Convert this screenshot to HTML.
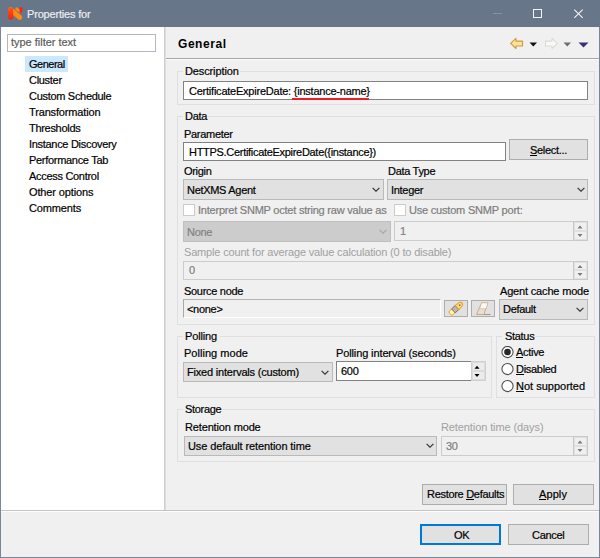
<!DOCTYPE html>
<html><head><meta charset="utf-8">
<style>
*{box-sizing:border-box;margin:0;padding:0}
html,body{width:600px;height:558px;overflow:hidden;background:#f0f0f0}
body{position:relative;font-family:"Liberation Sans",sans-serif;font-size:11px;line-height:12px;color:#000}
.a{position:absolute}
.t{position:absolute;white-space:pre;letter-spacing:-0.3px;font-size:11px;line-height:12px;-webkit-text-stroke-width:0.2px}
.dis{color:#a0a0a0;-webkit-text-stroke-width:0 !important}
.dis2{color:#7d7d7d}
.grp{position:absolute;border:1px solid #dfdfdf}
.txt{position:absolute;background:#fff;border:1px solid #828282}
.btn{position:absolute;background:#e1e1e1;border:1px solid #adadad}
.cmb{position:absolute;background:#e1e1e1;border:1px solid #b9b9b9}
.chev{position:absolute;width:8px;height:5px}
u{text-decoration:none;border-bottom:1px solid currentColor;display:inline-block;line-height:10px}
</style></head>
<body>
<!-- title bar -->
<div class="a" style="left:0;top:0;width:600px;height:27px;background:#68768a"></div>
<div class="a" style="left:0;top:27px;width:1px;height:531px;background:#7a8698"></div>
<div class="a" style="left:599px;top:27px;width:1px;height:531px;background:#7a8698"></div>
<div class="a" style="left:0;top:557px;width:600px;height:1px;background:#7a8698"></div>
<svg class="a" style="left:5px;top:4px" width="21" height="19" viewBox="0 0 21 19">
  <defs>
    <linearGradient id="lg1" gradientUnits="userSpaceOnUse" x1="0" y1="3" x2="0" y2="16"><stop offset="0" stop-color="#ff5a16"/><stop offset="1" stop-color="#ff1c0a"/></linearGradient>
  </defs>
  <path d="M11.6 4.7 L14 6.8" stroke="#ff8612" stroke-width="2.8" stroke-linecap="round"/>
  <path d="M16 4.4 L16 7.6" stroke="#ff220c" stroke-width="2.8" stroke-linecap="round"/>
  <path d="M5.7 5.7 L14.7 13.3" stroke="#ff8a12" stroke-width="5" stroke-linecap="round"/>
  <path d="M5.7 5.7 L5.7 13.3" stroke="url(#lg1)" stroke-width="5" stroke-linecap="round"/>
</svg>
<div class="t" style="left:27px;top:8px;color:#eaeef2;letter-spacing:-0.18px">Properties for</div>
<div class="a" style="left:493px;top:13px;width:9px;height:1px;background:#8693a4"></div>
<div class="a" style="left:533px;top:9px;width:9px;height:9px;border:1px solid #f2f4f6"></div>
<svg class="a" style="left:573px;top:8px" width="12" height="12" viewBox="0 0 12 12"><path d="M1.3 1.6 L9.7 9.9 M9.7 1.6 L1.3 9.9" stroke="#f4f6f8" stroke-width="1.05"/></svg>

<!-- sidebar -->
<div class="a" style="left:1px;top:27px;width:163px;height:483px;background:#fff"></div>
<div class="a" style="left:164px;top:27px;width:1px;height:483px;background:#d0d0d0"></div>
<div class="a" style="left:165px;top:27px;width:1px;height:483px;background:#dcdcdc"></div>
<div class="a" style="left:7px;top:34px;width:149px;height:18px;border:1px solid #b3b7c2;background:#fff"></div>
<div class="t" style="left:11px;top:36px;letter-spacing:-0.02px;color:#5c5c5c">type filter text</div>
<div class="a" style="left:25px;top:56px;width:43px;height:16px;background:#cce8ff"></div>
<div class="t" style="left:29px;top:58px;letter-spacing:-0.5px">General</div>
<div class="t" style="left:29px;top:74px">Cluster</div>
<div class="t" style="left:29px;top:90px">Custom Schedule</div>
<div class="t" style="left:29px;top:106px;letter-spacing:-0.15px">Transformation</div>
<div class="t" style="left:29px;top:122px">Thresholds</div>
<div class="t" style="left:29px;top:138px">Instance Discovery</div>
<div class="t" style="left:29px;top:154px">Performance Tab</div>
<div class="t" style="left:29px;top:170px">Access Control</div>
<div class="t" style="left:29px;top:186px;letter-spacing:-0.12px">Other options</div>
<div class="t" style="left:29px;top:202px;letter-spacing:-0.15px">Comments</div>

<!-- separators -->
<div class="a" style="left:1px;top:510px;width:598px;height:1px;background:#c4c4c4"></div>
<div class="a" style="left:1px;top:511px;width:598px;height:1px;background:#fdfdfd"></div>
<div class="a" style="left:166px;top:58px;width:433px;height:1px;background:#a6a6a6"></div>
<div class="a" style="left:166px;top:59px;width:433px;height:1px;background:#fcfcfc"></div>

<!-- header -->
<div class="t" style="left:178px;top:38px;font-weight:bold;font-size:12px;line-height:13px;letter-spacing:0.55px;-webkit-text-stroke-width:0">General</div>
<!-- back arrow -->
<svg class="a" style="left:509px;top:37px" width="16" height="13" viewBox="0 0 16 13">
  <path d="M1.6 6.4 L7 1.4 L7 4.1 L13.5 4.1 L13.5 9 L7 9 L7 11.5 Z" fill="#fae3a0" stroke="#d39a2e" stroke-width="1.1" stroke-linejoin="round"/>
</svg>
<svg class="a" style="left:529px;top:42px" width="9" height="5" viewBox="0 0 9 5"><path d="M0.5 0.5 L8 0.5 L4.25 4.5 Z" fill="#111"/></svg>
<svg class="a" style="left:543px;top:37px" width="16" height="13" viewBox="0 0 16 13">
  <path d="M14.4 6.4 L9 1.4 L9 4.1 L2.5 4.1 L2.5 9 L9 9 L9 11.5 Z" fill="#f8f8f6" stroke="#dcdcd6" stroke-width="1.1" stroke-linejoin="round"/>
</svg>
<svg class="a" style="left:563px;top:42px" width="9" height="5" viewBox="0 0 9 5"><path d="M0.5 0.5 L8 0.5 L4.25 4.5 Z" fill="#6e6e6e"/></svg>
<svg class="a" style="left:578px;top:42px" width="11" height="6" viewBox="0 0 11 6"><path d="M0.5 0.5 L10.5 0.5 L5.5 5.5 Z" fill="#3a3270"/></svg>

<!-- Description group -->
<div class="grp" style="left:177px;top:71px;width:418px;height:34px"></div>
<div class="a" style="left:183px;top:64px;width:57px;height:12px;background:#f0f0f0"></div>
<div class="t" style="left:185px;top:65px;letter-spacing:-0.12px">Description</div>
<div class="txt" style="left:183px;top:81px;width:405px;height:19px"></div>
<div class="t" style="left:189px;top:85px;letter-spacing:-0.23px">CertificateExpireDate: {instance-name}</div>
<div class="a" style="left:292px;top:98px;width:77px;height:2px;background:#f21a28"></div>

<!-- Data group -->
<div class="grp" style="left:177px;top:116px;width:418px;height:209px"></div>
<div class="a" style="left:183px;top:110px;width:25px;height:12px;background:#f0f0f0"></div>
<div class="t" style="left:185px;top:110px">Data</div>
<div class="t" style="left:184px;top:128px">Parameter</div>
<div class="txt" style="left:183px;top:142px;width:323px;height:19px"></div>
<div class="t" style="left:189px;top:146px">HTTPS.CertificateExpireDate({instance})</div>
<div class="btn" style="left:509px;top:139px;width:79px;height:21px"></div>
<div class="t" style="left:530px;top:144px"><u>S</u>elect...</div>
<div class="t" style="left:184px;top:165px">Origin</div>
<div class="t" style="left:388px;top:165px">Data Type</div>
<div class="cmb" style="left:183px;top:179px;width:201px;height:21px"></div>
<div class="t" style="left:187px;top:184px">NetXMS Agent</div>
<svg class="chev" style="left:372px;top:187px" viewBox="0 0 8 5"><path d="M0.6 0.9 L4 4.2 L7.4 0.9" fill="none" stroke="#3a3a3a" stroke-width="1.25"/></svg>
<div class="cmb" style="left:387px;top:179px;width:201px;height:21px"></div>
<div class="t" style="left:391px;top:184px">Integer</div>
<svg class="chev" style="left:577px;top:187px" viewBox="0 0 8 5"><path d="M0.6 0.9 L4 4.2 L7.4 0.9" fill="none" stroke="#3a3a3a" stroke-width="1.25"/></svg>
<div class="a" style="left:183px;top:204px;width:12px;height:12px;border:1px solid #cccccc;background:#fff"></div>
<div class="t dis2" style="left:198px;top:204px;letter-spacing:-0.22px">Interpret SNMP octet string raw value as</div>
<div class="a" style="left:394px;top:204px;width:12px;height:12px;border:1px solid #cccccc;background:#fff"></div>
<div class="t dis2" style="left:409px;top:204px;letter-spacing:-0.2px">Use custom SNMP port:</div>
<div class="a" style="left:183px;top:221px;width:208px;height:21px;background:#cccccc;border:1px solid #bfbfbf"></div>
<div class="t" style="left:187px;top:226px;color:#838383">None</div>
<svg class="chev" style="left:379px;top:229px" viewBox="0 0 8 5"><path d="M0.6 0.9 L4 4.2 L7.4 0.9" fill="none" stroke="#a8a8a8" stroke-width="1.25"/></svg>
<div class="a" style="left:394px;top:221px;width:194px;height:20px;background:#f0f0f0;border:1px solid #cccccc"></div>
<svg class="a" style="left:573px;top:221px" width="15" height="20" viewBox="0 0 15 20"><rect x="0.5" y="0.5" width="14" height="19" fill="#f0f0f0" stroke="#c9c9c9"/><rect x="1.5" y="1.5" width="12" height="8" fill="#f0f0f0" stroke="#e0e0e0"/><rect x="1.5" y="10.5" width="12" height="8" fill="#f0f0f0" stroke="#e0e0e0"/><path d="M4.5 7.5 L9.5 7.5 L7 4.5 Z" fill="#7a7a7a"/><path d="M4.5 13.0 L9.5 13.0 L7 16.0 Z" fill="#7a7a7a"/></svg>
<div class="t dis2" style="left:400px;top:225px;color:#838383">1</div>
<div class="t dis" style="left:184px;top:246px;letter-spacing:-0.17px">Sample count for average value calculation (0 to disable)</div>
<div class="a" style="left:183px;top:261px;width:405px;height:19px;background:#f0f0f0;border:1px solid #cccccc"></div>
<svg class="a" style="left:573px;top:261px" width="15" height="19" viewBox="0 0 15 19"><rect x="0.5" y="0.5" width="14" height="18" fill="#f0f0f0" stroke="#c9c9c9"/><rect x="1.5" y="1.5" width="12" height="7" fill="#f0f0f0" stroke="#e0e0e0"/><rect x="1.5" y="9.5" width="12" height="8" fill="#f0f0f0" stroke="#e0e0e0"/><path d="M4.5 7.0 L9.5 7.0 L7 4.0 Z" fill="#7a7a7a"/><path d="M4.5 12.0 L9.5 12.0 L7 15.0 Z" fill="#7a7a7a"/></svg>
<div class="t dis2" style="left:189px;top:264px">0</div>
<div class="t" style="left:184px;top:285px">Source node</div>
<div class="t" style="left:500px;top:285px;letter-spacing:-0.17px">Agent cache mode</div>
<div class="a" style="left:183px;top:299px;width:258px;height:19px;background:#f0f0f0;border-top:1px solid #b4b4b4;border-left:1px solid #a8a8a8;border-right:1px solid #fff;border-bottom:1px solid #fff"></div>
<div class="t" style="left:187px;top:303px">&lt;none&gt;</div>
<div class="btn" style="left:444px;top:300px;width:24px;height:17px"></div>
<svg class="a" style="left:444px;top:300px" width="24" height="17" viewBox="0 0 24 17"><g transform="rotate(-42 12 8.5)"><rect x="4" y="6" width="5" height="5" rx="1.5" fill="#fff3b0" stroke="#e0a020" stroke-width="0.9"/><rect x="8.5" y="5.8" width="5" height="5.4" fill="#b8b4c0" stroke="#8a7040" stroke-width="0.9"/><path d="M13.5 5.6 L19 6.3 L20.5 8.5 L19 10.7 L13.5 11.4 Z" fill="#fbd870" stroke="#e09820" stroke-width="0.9"/><circle cx="17" cy="8.5" r="0.8" fill="#4a7090"/></g></svg>
<div class="btn" style="left:471px;top:300px;width:24px;height:17px"></div>
<svg class="a" style="left:471px;top:300px" width="24" height="17" viewBox="0 0 24 17"><path d="M10.7 2.8 L16.8 2.8 L12.9 14.5 L5.5 14.5 Z" fill="#eadfcf" stroke="#b9a888" stroke-width="0.9" stroke-linejoin="round"/><path d="M10.7 2.8 L16.8 2.8 L15.2 8.8 L8.5 8.8 Z" fill="#fbf8f2" stroke="#c8b898" stroke-width="0.7"/><path d="M13 14.5 L19.5 14.5" stroke="#a89878" stroke-width="1"/></svg>
<div class="cmb" style="left:499px;top:299px;width:89px;height:21px"></div>
<div class="t" style="left:503px;top:303px">Default</div>
<svg class="chev" style="left:576px;top:307px" viewBox="0 0 8 5"><path d="M0.6 0.9 L4 4.2 L7.4 0.9" fill="none" stroke="#3a3a3a" stroke-width="1.25"/></svg>

<!-- Polling group -->
<div class="grp" style="left:177px;top:336px;width:315px;height:62px"></div>
<div class="a" style="left:183px;top:329px;width:37px;height:12px;background:#f0f0f0"></div>
<div class="t" style="left:185px;top:330px;letter-spacing:-0.15px">Polling</div>
<div class="t" style="left:184px;top:347px;letter-spacing:0.03px">Polling mode</div>
<div class="t" style="left:336px;top:347px;letter-spacing:-0.12px">Polling interval (seconds)</div>
<div class="cmb" style="left:183px;top:362px;width:150px;height:20px"></div>
<div class="t" style="left:187px;top:366px;letter-spacing:-0.2px">Fixed intervals (custom)</div>
<svg class="chev" style="left:321px;top:370px" viewBox="0 0 8 5"><path d="M0.6 0.9 L4 4.2 L7.4 0.9" fill="none" stroke="#3a3a3a" stroke-width="1.25"/></svg>
<div class="txt" style="left:336px;top:361px;width:150px;height:20px"></div>
<svg class="a" style="left:471px;top:361px" width="15" height="20" viewBox="0 0 15 20"><rect x="0.5" y="0.5" width="14" height="19" fill="#ececec" stroke="#d0d0d0"/><rect x="1.5" y="1.5" width="12" height="8" fill="#ececec" stroke="#dcdcdc"/><rect x="1.5" y="10.5" width="12" height="8" fill="#ececec" stroke="#dcdcdc"/><path d="M3.5 7.8 L8.5 7.8 L6 4.8 Z" fill="#000"/><path d="M3.5 13.0 L8.5 13.0 L6 16.0 Z" fill="#000"/></svg>
<div class="t" style="left:341px;top:365px">600</div>

<!-- Status group -->
<div class="grp" style="left:496px;top:336px;width:99px;height:62px"></div>
<div class="a" style="left:502px;top:329px;width:33px;height:12px;background:#f0f0f0"></div>
<div class="t" style="left:505px;top:330px">Status</div>
<svg class="a" style="left:500px;top:346px" width="14" height="48" viewBox="0 0 14 48">
 <circle cx="7.5" cy="6" r="5.6" fill="#fff" stroke="#4a4a4a" stroke-width="1.05"/>
 <circle cx="7.5" cy="6" r="3.3" fill="#262626"/>
 <circle cx="7.5" cy="23" r="5.6" fill="#fff" stroke="#4a4a4a" stroke-width="1.05"/>
 <circle cx="7.5" cy="40" r="5.6" fill="#fff" stroke="#4a4a4a" stroke-width="1.05"/>
</svg>
<div class="t" style="left:516px;top:346px"><u>A</u>ctive</div>
<div class="t" style="left:516px;top:363px"><u>D</u>isabled</div>
<div class="t" style="left:516px;top:380px;letter-spacing:0px"><u>N</u>ot supported</div>

<!-- Storage group -->
<div class="grp" style="left:177px;top:409px;width:418px;height:53px"></div>
<div class="a" style="left:183px;top:403px;width:40px;height:12px;background:#f0f0f0"></div>
<div class="t" style="left:185px;top:403px">Storage</div>
<div class="t" style="left:185px;top:421px;letter-spacing:-0.15px">Retention mode</div>
<div class="t dis" style="left:441px;top:421px;letter-spacing:-0.1px">Retention time (days)</div>
<div class="cmb" style="left:184px;top:436px;width:253px;height:20px"></div>
<div class="t" style="left:188px;top:440px;letter-spacing:-0.1px">Use default retention time</div>
<svg class="chev" style="left:426px;top:443px" viewBox="0 0 8 5"><path d="M0.6 0.9 L4 4.2 L7.4 0.9" fill="none" stroke="#3a3a3a" stroke-width="1.25"/></svg>
<div class="a" style="left:441px;top:436px;width:147px;height:20px;background:#f0f0f0;border:1px solid #cccccc"></div>
<svg class="a" style="left:573px;top:436px" width="15" height="20" viewBox="0 0 15 20"><rect x="0.5" y="0.5" width="14" height="19" fill="#f0f0f0" stroke="#c9c9c9"/><rect x="1.5" y="1.5" width="12" height="8" fill="#f0f0f0" stroke="#e0e0e0"/><rect x="1.5" y="10.5" width="12" height="8" fill="#f0f0f0" stroke="#e0e0e0"/><path d="M4.5 7.5 L9.5 7.5 L7 4.5 Z" fill="#7a7a7a"/><path d="M4.5 13.0 L9.5 13.0 L7 16.0 Z" fill="#7a7a7a"/></svg>
<div class="t dis2" style="left:446px;top:440px">30</div>

<!-- page buttons -->
<div class="btn" style="left:422px;top:484px;width:85px;height:21px"></div>
<div class="t" style="left:427px;top:488px">Restore <u>D</u>efaults</div>
<div class="btn" style="left:513px;top:484px;width:81px;height:21px"></div>
<div class="t" style="left:539px;top:488px;letter-spacing:0.1px"><u>A</u>pply</div>
<div class="btn" style="left:420px;top:524px;width:81px;height:21px;border:2px solid #0078d7"></div>
<div class="t" style="left:454px;top:529px">OK</div>
<div class="btn" style="left:508px;top:524px;width:81px;height:21px"></div>
<div class="t" style="left:532px;top:529px">Cancel</div>
</body></html>
